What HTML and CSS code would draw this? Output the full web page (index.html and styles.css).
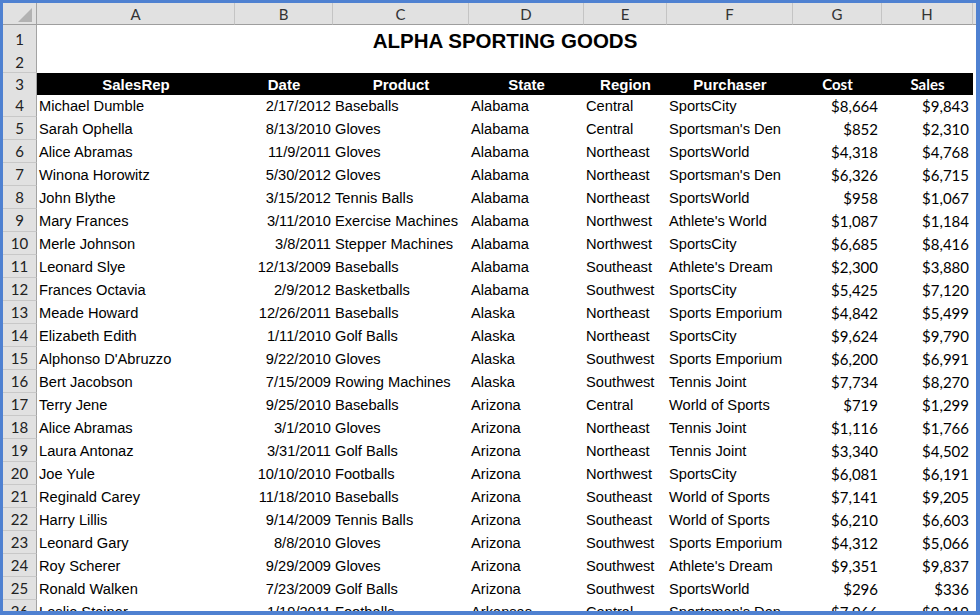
FILE: index.html
```html
<!DOCTYPE html>
<html>
<head>
<meta charset="utf-8">
<link rel="stylesheet" href="styles.css">
</head>
<body>
<div class="frame">
  <div class="sheet">
    <div class="row colhead">
      <div class="corner"><span class="tri"></span></div>
      <div class="ch">A</div><div class="ch">B</div><div class="ch">C</div><div class="ch">D</div><div class="ch">E</div><div class="ch">F</div><div class="ch">G</div><div class="ch">H</div><div class="ch">I</div>
    </div>
    <div class="row r-title">
      <div class="rh">1</div>
      <div class="title">ALPHA SPORTING GOODS</div>
    </div>
    <div class="row r-blank">
      <div class="rh">2</div>
    </div>
    <div class="row r-head">
      <div class="rh">3</div>
      <div class="hd">SalesRep</div><div class="hd">Date</div><div class="hd">Product</div><div class="hd">State</div><div class="hd">Region</div><div class="hd">Purchaser</div><div class="hd num">Cost</div><div class="hd num">Sales</div><div class="blank"></div>
    </div>
    <div class="row"><div class="rh">4</div><div class="c">Michael Dumble</div><div class="c d">2/17/2012</div><div class="c">Baseballs</div><div class="c">Alabama</div><div class="c">Central</div><div class="c">SportsCity</div><div class="c n">$8,664</div><div class="c n">$9,843</div><div></div></div>
    <div class="row"><div class="rh">5</div><div class="c">Sarah Ophella</div><div class="c d">8/13/2010</div><div class="c">Gloves</div><div class="c">Alabama</div><div class="c">Central</div><div class="c">Sportsman's Den</div><div class="c n">$852</div><div class="c n">$2,310</div><div></div></div>
    <div class="row"><div class="rh">6</div><div class="c">Alice Abramas</div><div class="c d">11/9/2011</div><div class="c">Gloves</div><div class="c">Alabama</div><div class="c">Northeast</div><div class="c">SportsWorld</div><div class="c n">$4,318</div><div class="c n">$4,768</div><div></div></div>
    <div class="row"><div class="rh">7</div><div class="c">Winona Horowitz</div><div class="c d">5/30/2012</div><div class="c">Gloves</div><div class="c">Alabama</div><div class="c">Northeast</div><div class="c">Sportsman's Den</div><div class="c n">$6,326</div><div class="c n">$6,715</div><div></div></div>
    <div class="row"><div class="rh">8</div><div class="c">John Blythe</div><div class="c d">3/15/2012</div><div class="c">Tennis Balls</div><div class="c">Alabama</div><div class="c">Northeast</div><div class="c">SportsWorld</div><div class="c n">$958</div><div class="c n">$1,067</div><div></div></div>
    <div class="row"><div class="rh">9</div><div class="c">Mary Frances</div><div class="c d">3/11/2010</div><div class="c">Exercise Machines</div><div class="c">Alabama</div><div class="c">Northwest</div><div class="c">Athlete's World</div><div class="c n">$1,087</div><div class="c n">$1,184</div><div></div></div>
    <div class="row"><div class="rh">10</div><div class="c">Merle Johnson</div><div class="c d">3/8/2011</div><div class="c">Stepper Machines</div><div class="c">Alabama</div><div class="c">Northwest</div><div class="c">SportsCity</div><div class="c n">$6,685</div><div class="c n">$8,416</div><div></div></div>
    <div class="row"><div class="rh">11</div><div class="c">Leonard Slye</div><div class="c d">12/13/2009</div><div class="c">Baseballs</div><div class="c">Alabama</div><div class="c">Southeast</div><div class="c">Athlete's Dream</div><div class="c n">$2,300</div><div class="c n">$3,880</div><div></div></div>
    <div class="row"><div class="rh">12</div><div class="c">Frances Octavia</div><div class="c d">2/9/2012</div><div class="c">Basketballs</div><div class="c">Alabama</div><div class="c">Southwest</div><div class="c">SportsCity</div><div class="c n">$5,425</div><div class="c n">$7,120</div><div></div></div>
    <div class="row"><div class="rh">13</div><div class="c">Meade Howard</div><div class="c d">12/26/2011</div><div class="c">Baseballs</div><div class="c">Alaska</div><div class="c">Northeast</div><div class="c">Sports Emporium</div><div class="c n">$4,842</div><div class="c n">$5,499</div><div></div></div>
    <div class="row"><div class="rh">14</div><div class="c">Elizabeth Edith</div><div class="c d">1/11/2010</div><div class="c">Golf Balls</div><div class="c">Alaska</div><div class="c">Northeast</div><div class="c">SportsCity</div><div class="c n">$9,624</div><div class="c n">$9,790</div><div></div></div>
    <div class="row"><div class="rh">15</div><div class="c">Alphonso D'Abruzzo</div><div class="c d">9/22/2010</div><div class="c">Gloves</div><div class="c">Alaska</div><div class="c">Southwest</div><div class="c">Sports Emporium</div><div class="c n">$6,200</div><div class="c n">$6,991</div><div></div></div>
    <div class="row"><div class="rh">16</div><div class="c">Bert Jacobson</div><div class="c d">7/15/2009</div><div class="c">Rowing Machines</div><div class="c">Alaska</div><div class="c">Southwest</div><div class="c">Tennis Joint</div><div class="c n">$7,734</div><div class="c n">$8,270</div><div></div></div>
    <div class="row"><div class="rh">17</div><div class="c">Terry Jene</div><div class="c d">9/25/2010</div><div class="c">Baseballs</div><div class="c">Arizona</div><div class="c">Central</div><div class="c">World of Sports</div><div class="c n">$719</div><div class="c n">$1,299</div><div></div></div>
    <div class="row"><div class="rh">18</div><div class="c">Alice Abramas</div><div class="c d">3/1/2010</div><div class="c">Gloves</div><div class="c">Arizona</div><div class="c">Northeast</div><div class="c">Tennis Joint</div><div class="c n">$1,116</div><div class="c n">$1,766</div><div></div></div>
    <div class="row"><div class="rh">19</div><div class="c">Laura Antonaz</div><div class="c d">3/31/2011</div><div class="c">Golf Balls</div><div class="c">Arizona</div><div class="c">Northeast</div><div class="c">Tennis Joint</div><div class="c n">$3,340</div><div class="c n">$4,502</div><div></div></div>
    <div class="row"><div class="rh">20</div><div class="c">Joe Yule</div><div class="c d">10/10/2010</div><div class="c">Footballs</div><div class="c">Arizona</div><div class="c">Northwest</div><div class="c">SportsCity</div><div class="c n">$6,081</div><div class="c n">$6,191</div><div></div></div>
    <div class="row"><div class="rh">21</div><div class="c">Reginald Carey</div><div class="c d">11/18/2010</div><div class="c">Baseballs</div><div class="c">Arizona</div><div class="c">Southeast</div><div class="c">World of Sports</div><div class="c n">$7,141</div><div class="c n">$9,205</div><div></div></div>
    <div class="row"><div class="rh">22</div><div class="c">Harry Lillis</div><div class="c d">9/14/2009</div><div class="c">Tennis Balls</div><div class="c">Arizona</div><div class="c">Southeast</div><div class="c">World of Sports</div><div class="c n">$6,210</div><div class="c n">$6,603</div><div></div></div>
    <div class="row"><div class="rh">23</div><div class="c">Leonard Gary</div><div class="c d">8/8/2010</div><div class="c">Gloves</div><div class="c">Arizona</div><div class="c">Southwest</div><div class="c">Sports Emporium</div><div class="c n">$4,312</div><div class="c n">$5,066</div><div></div></div>
    <div class="row"><div class="rh">24</div><div class="c">Roy Scherer</div><div class="c d">9/29/2009</div><div class="c">Gloves</div><div class="c">Arizona</div><div class="c">Southwest</div><div class="c">Athlete's Dream</div><div class="c n">$9,351</div><div class="c n">$9,837</div><div></div></div>
    <div class="row"><div class="rh">25</div><div class="c">Ronald Walken</div><div class="c d">7/23/2009</div><div class="c">Golf Balls</div><div class="c">Arizona</div><div class="c">Southwest</div><div class="c">SportsWorld</div><div class="c n">$296</div><div class="c n">$336</div><div></div></div>
    <div class="row"><div class="rh">26</div><div class="c">Leslie Stainer</div><div class="c d">1/19/2011</div><div class="c">Footballs</div><div class="c">Arkansas</div><div class="c">Central</div><div class="c">Sportsman's Den</div><div class="c n">$7,966</div><div class="c n">$9,219</div><div></div></div>
  </div>
</div>
</body>
</html>
```

FILE: styles.css
```css
* { box-sizing: border-box; }
html, body { margin: 0; padding: 0; }
body { background: #4f81d1; }

.frame {
  width: 980px;
  height: 615px;
  border-style: solid;
  border-color: #4f81d1;
  border-width: 3px 4px 4px 3px;
  background: #ffffff;
  overflow: hidden;
}

.sheet {
  width: 1030px;
  font-family: "Liberation Sans", Arial, sans-serif;
  font-size: 15px;
  color: #000;
}

.row {
  display: grid;
  grid-template-columns: 34px 198px 98px 136px 115px 83px 126px 89px 91px 60px;
  height: 23px;
}

.colhead { height: 22px; }
.r-title { height: 27px; }
.r-blank { height: 21px; }
.r-head { height: 21px; }

.corner {
  background: #e1e1e1;
  border-right: 1px solid #a3a3a3;
  border-bottom: 1px solid #9e9e9e;
  display: flex;
  justify-content: flex-end;
  align-items: flex-end;
  padding: 0 4px 2px 0;
}
.tri {
  width: 14px;
  height: 14px;
  background: #b2b2b2;
  clip-path: polygon(100% 0, 100% 100%, 0 100%);
}

.ch {
  background: #e1e1e1;
  border-right: 1px solid #c4c4c4;
  border-bottom: 1px solid #9e9e9e;
  font-family: Lato, "Liberation Sans", sans-serif;
  font-size: 15px;
  color: #333;
  display: flex;
  align-items: center;
  justify-content: center;
  padding-top: 1px;
}

.rh {
  background: #e1e1e1;
  border-right: 1px solid #a3a3a3;
  border-bottom: 1px solid #c8c8c8;
  font-family: Lato, "Liberation Sans", sans-serif;
  font-size: 15px;
  color: #222;
  display: flex;
  align-items: center;
  justify-content: center;
}

.title {
  grid-column: 2 / 10;
  text-align: center;
  font-weight: bold;
  font-size: 20.5px;
  line-height: 27px;
  padding-top: 2px;
}

.hd {
  background: #000;
  color: #fff;
  font-weight: bold;
  text-align: center;
  line-height: 21px;
  padding-top: 1px;
  white-space: nowrap;
}
.hd.num { font-family: Lato, "Liberation Sans", sans-serif; }
.blank { background: #fff; }

.c {
  white-space: nowrap;
  overflow: hidden;
  font-size: 14.67px;
  line-height: 21px;
  padding: 2px 2px 0 2px;
}
.c.d { text-align: right; padding-right: 2px; }
.c.n {
  text-align: right;
  font-family: Lato, "Liberation Sans", sans-serif;
  font-size: 15px;
  padding-right: 4px;
}
```
